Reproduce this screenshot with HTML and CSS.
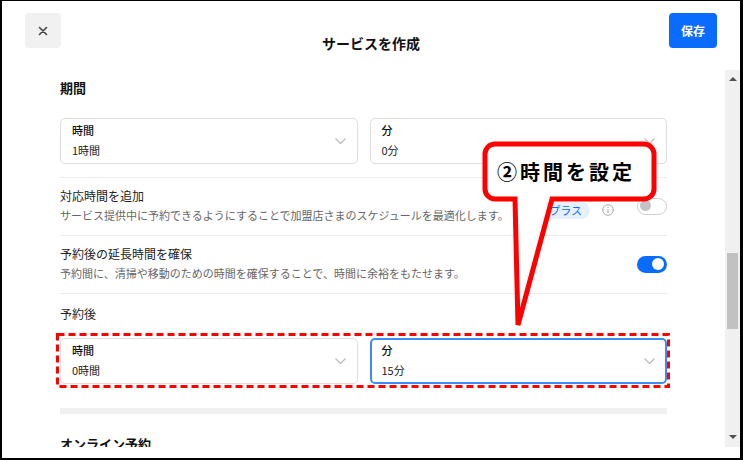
FILE: index.html
```html
<!DOCTYPE html>
<html lang="ja">
<head>
<meta charset="utf-8">
<title>サービスを作成</title>
<link rel="stylesheet" href="styles.css">
</head>
<body>
<div class="shot">
  <div class="frame">
    <header class="header">
      <button class="close-btn" type="button" aria-label="閉じる">
        <svg width="10" height="10" viewBox="0 0 10 10"><path d="M1.5 1.5 L8.5 8.5 M8.5 1.5 L1.5 8.5" stroke="#444" stroke-width="1.6" stroke-linecap="round"/></svg>
      </button>
      <h1 class="title">サービスを作成</h1>
      <button class="save-btn" type="button">保存</button>
    </header>

    <div class="body">
      <div class="content">
        <h2 class="section-title">期間</h2>
        <div class="select-row">
          <div class="select">
            <div class="select-text">
              <div class="select-label">時間</div>
              <div class="select-value">1時間</div>
            </div>
            <svg class="chev" width="11" height="6" viewBox="0 0 11 6"><path d="M0.5 0.5 L5.5 5.5 L10.5 0.5" fill="none" stroke="#bbb" stroke-width="1.2"/></svg>
          </div>
          <div class="select">
            <div class="select-text">
              <div class="select-label">分</div>
              <div class="select-value">0分</div>
            </div>
            <svg class="chev" width="11" height="6" viewBox="0 0 11 6"><path d="M0.5 0.5 L5.5 5.5 L10.5 0.5" fill="none" stroke="#bbb" stroke-width="1.2"/></svg>
          </div>
        </div>

        <div class="divider first"></div>

        <div class="row">
          <div class="row-text">
            <div class="row-title">対応時間を追加</div>
            <div class="row-desc">サービス提供中に予約できるようにすることで加盟店さまのスケジュールを最適化します。</div>
          </div>
          <span class="badge">プラス</span>
          <svg class="info" width="12" height="12" viewBox="0 0 12 12"><circle cx="6" cy="6" r="5.3" fill="none" stroke="#aaa" stroke-width="1"/><path d="M6 5.2 V9" stroke="#aaa" stroke-width="1.1"/><circle cx="6" cy="3.4" r="0.7" fill="#aaa"/></svg>
          <span class="toggle off"><span class="knob"></span></span>
        </div>

        <div class="divider"></div>

        <div class="row">
          <div class="row-text">
            <div class="row-title">予約後の延長時間を確保</div>
            <div class="row-desc">予約間に、清掃や移動のための時間を確保することで、時間に余裕をもたせます。</div>
          </div>
          <span class="toggle on"><span class="knob"></span></span>
        </div>

        <div class="divider"></div>

        <div class="sub-title">予約後</div>
        <div class="select-row">
          <div class="select">
            <div class="select-text">
              <div class="select-label">時間</div>
              <div class="select-value">0時間</div>
            </div>
            <svg class="chev" width="11" height="6" viewBox="0 0 11 6"><path d="M0.5 0.5 L5.5 5.5 L10.5 0.5" fill="none" stroke="#bbb" stroke-width="1.2"/></svg>
          </div>
          <div class="select focused">
            <div class="select-text">
              <div class="select-label">分</div>
              <div class="select-value">15分</div>
            </div>
            <svg class="chev" width="11" height="6" viewBox="0 0 11 6"><path d="M0.5 0.5 L5.5 5.5 L10.5 0.5" fill="none" stroke="#bbb" stroke-width="1.2"/></svg>
          </div>
        </div>

        <div class="band"></div>

        <h2 class="section-title next">オンライン予約</h2>
      </div>

      <div class="scrollbar">
        <span class="arrow up"></span>
        <div class="track"><span class="thumb"></span></div>
        <span class="arrow down"></span>
      </div>
    </div>
    <div class="footer"></div>
  </div>

  <svg class="overlay" width="743" height="460" viewBox="0 0 743 460">
    <rect x="57.5" y="334.5" width="611" height="52" fill="none" stroke="#ff0000" stroke-width="3" stroke-dasharray="7 4"/>
    <path d="M495 144 H644 A10 10 0 0 1 654 154 V189 A10 10 0 0 1 644 199 H552 L518 325 L515 199 H495 A10 10 0 0 1 485 189 V154 A10 10 0 0 1 495 144 Z" fill="#fff" stroke="#ff0000" stroke-width="5"/>
  </svg>
  <div class="callout-text">②時間を設定</div>
</div>
</body>
</html>
```

FILE: styles.css
```css
* { box-sizing: border-box; }

html, body {
  margin: 0;
  padding: 0;
  background: #fff;
}

body {
  font-family: "Noto Sans CJK JP", "Noto Sans", sans-serif;
  color: #222;
}

.shot {
  position: relative;
  width: 743px;
  height: 460px;
  background: #000;
  padding: 1px 3px 2px 2px;
}

.frame {
  width: 100%;
  height: 100%;
  background: #fff;
  display: flex;
  flex-direction: column;
  overflow: hidden;
}

/* header */
.header {
  height: 69px;
  flex: none;
  display: grid;
  grid-template-columns: 1fr auto 1fr;
  align-items: start;
  padding: 12px 23px 0 23px;
}

.close-btn {
  width: 36px;
  height: 35px;
  border: 0;
  border-radius: 4px;
  background: #f1f1f1;
  display: flex;
  align-items: center;
  justify-content: center;
  padding: 0;
}

.title {
  margin: 20px 0 0 0;
  text-align: center;
  font-size: 14px;
  line-height: 20px;
  font-weight: 700;
  color: #111;
}

.save-btn {
  justify-self: end;
  width: 48px;
  height: 35px;
  border: 0;
  border-radius: 4px;
  background: #0a6cff;
  color: #fff;
  font-family: inherit;
  font-size: 12px;
  font-weight: 700;
  padding: 0;
}

/* body */
.body {
  height: 377px;
  flex: none;
  display: flex;
}

.content {
  flex: 1;
  overflow: hidden;
  padding: 9px 58px 0 58px;
}

.section-title {
  margin: 0;
  font-size: 13px;
  line-height: 18px;
  font-weight: 700;
  color: #111;
}

.section-title.next {
  margin-top: 21px;
}

.select-row {
  display: grid;
  grid-template-columns: 1fr 1fr;
  gap: 12px;
  margin-top: 21px;
}

.select {
  height: 46px;
  border: 1px solid #dedede;
  border-radius: 5px;
  display: flex;
  align-items: center;
  padding: 0 11px 0 11px;
}

.select.focused {
  border: 2px solid #3d8bf6;
  padding: 0 10px 0 10px;
}

.select-text {
  flex: 1;
  padding-bottom: 3px;
}

.select-label {
  font-size: 11px;
  line-height: 16px;
  font-weight: 500;
  color: #111;
}

.select-value {
  font-size: 11px;
  line-height: 16px;
  margin-top: 4px;
  color: #222;
}

.chev {
  flex: none;
}

.divider {
  height: 1px;
  background: #ececec;
}

.divider.first {
  margin-top: 13px;
}

.row {
  display: flex;
  align-items: center;
  padding: 9px 0 12px 0;
}

.row-text {
  flex: 1;
}

.row-title {
  font-size: 12px;
  line-height: 18px;
  color: #222;
}

.row-desc {
  font-size: 11px;
  line-height: 16px;
  margin-top: 2px;
  color: #666;
}

.badge {
  font-size: 11px;
  line-height: 17px;
  padding: 0 8px;
  border-radius: 9px;
  background: #e6f0ff;
  color: #0a6cff;
  margin-top: 10px;
}

.info {
  margin: 10px 0 0 12px;
}

.toggle {
  width: 30px;
  height: 17px;
  border-radius: 9px;
  position: relative;
  margin-left: 23px;
  flex: none;
}

.row-text + .toggle {
  margin-left: 0;
}

.toggle.off {
  background: #fff;
  border: 1.5px solid #cfcfcf;
  margin-top: 2px;
}

.toggle.on {
  background: #0a6cff;
  margin-top: 2px;
}

.knob {
  position: absolute;
  border-radius: 50%;
}

.toggle.off .knob {
  width: 11px;
  height: 11px;
  left: 2px;
  top: 1.5px;
  background: #c4c4c4;
}

.toggle.on .knob {
  width: 12px;
  height: 12px;
  right: 3px;
  top: 2.5px;
  background: #fff;
}

.sub-title {
  margin-top: 11px;
  font-size: 12px;
  line-height: 18px;
  color: #222;
}

.sub-title + .select-row {
  margin-top: 15px;
}

.band {
  height: 6px;
  background: #f0f0f0;
  margin-top: 24px;
}

/* scrollbar */
.scrollbar {
  width: 15px;
  flex: none;
  background: #f0f0f0;
  display: flex;
  flex-direction: column;
  align-items: center;
}

.arrow {
  width: 0;
  height: 0;
  border-left: 4px solid transparent;
  border-right: 4px solid transparent;
  flex: none;
}

.arrow.up {
  border-bottom: 4px solid #505050;
  margin-top: 7px;
}

.arrow.down {
  border-top: 4px solid #505050;
  margin-bottom: 8px;
}

.track {
  flex: 1;
  width: 100%;
  padding: 0 2px;
  display: flex;
  flex-direction: column;
}

.thumb {
  display: block;
  height: 76px;
  margin-top: 172px;
  background: #c1c1c1;
}

.footer {
  flex: 1;
}

/* annotation overlay */
.overlay {
  position: absolute;
  left: 0;
  top: 0;
  pointer-events: none;
}

.callout-text {
  position: absolute;
  left: 497px;
  top: 158px;
  font-size: 20px;
  line-height: 28px;
  font-weight: 700;
  letter-spacing: 3px;
  color: #000;
  white-space: nowrap;
}
```
